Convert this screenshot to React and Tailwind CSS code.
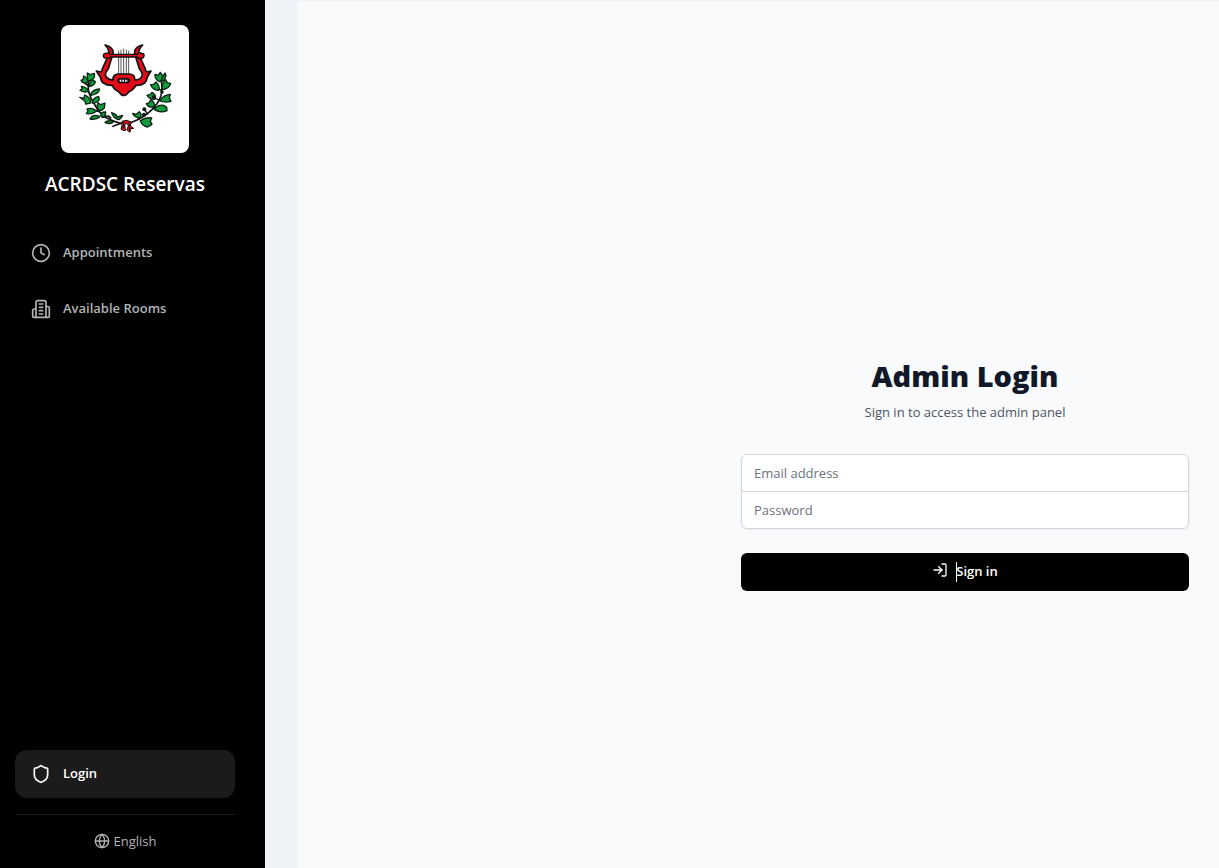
import React from "react";
import { Clock, Globe, LogIn, Shield } from "lucide-react";

const leaves = [
  "M98 184 Q96 172 97 159 L106 164 L118 160 Q121 172 112 179 Z",
  "M96 189 Q83 192 78 181 L84 179 L86 168 Q98 174 99 187 Z",
  "M103 198 Q104 184 113 180 L121 185 Q119 197 103 200 Z",
  "M98 214 Q86 219 75 211 L82 206 L79 199 Q92 200 100 211 Z",
  "M106 225 Q112 208 134 207 Q132 222 106 227 Z",
  "M104 250 L92 252 L90 244 L74 232 L87 235 L89 225 Q105 231 108 248 Z",
  "M112 247 Q114 233 131 229 L133 238 Q129 248 113 250 Z",
  "M122 275 Q113 283 94 281 L99 274 L96 267 Q111 262 123 272 Z",
  "M130 269 Q124 260 129 248 L137 254 L150 249 L148 264 Q140 273 131 271 Z",
  "M133 292 Q124 300 105 297 L112 288 Q124 283 134 290 Z",
  "M137 287 Q138 275 152 276 L151 286 L145 292 Z",
  "M174 307 Q163 314 150 307 Q158 299 173 303 Z",
  "M188 298 Q175 293 170 278 L183 284 L187 291 L203 286 Q196 299 189 299 Z",
  "M313 185 Q299 178 300 163 L309 166 L316 157 L324 169 Q322 182 314 185 Z",
  "M319 185 Q320 171 330 159 L333 167 L328 180 Z",
  "M308 211 Q292 208 287 194 L296 193 L303 186 Q315 196 312 210 Z",
  "M322 208 Q319 190 332 179 L337 188 L347 191 Q343 206 323 209 Z",
  "M298 238 Q287 240 276 226 L286 223 L291 217 Q304 224 301 236 Z",
  "M315 243 Q323 225 346 223 L343 234 L348 244 Q331 249 315 243 Z",
  "M295 261 Q281 264 274 251 L283 248 L287 239 Q301 248 298 259 Z",
  "M298 267 Q312 252 326 256 L335 262 L336 272 Q318 281 298 269 Z",
  "M253 294 Q238 292 233 280 L244 283 L253 275 Q262 284 256 294 Z",
  "M256 302 Q270 291 290 294 L286 304 L291 313 L278 321 Q262 318 256 302 Z",
];

function Emblem() {
  return (
    <svg viewBox="18 15 384 384" className="size-full" role="img" aria-label="ACRDSC emblem" strokeLinejoin="round">
      <g fill="none" stroke="#111111" strokeWidth="5" strokeLinecap="round">
        <path d="M103 174 Q98 198 101 215 Q107 236 117 250 Q132 279 153 293 Q174 303 196 310" />
        <path d="M90 190 L101 198 M90 210 L102 216 M124 216 L106 225 M145 258 L127 268 M120 272 L131 274 M142 292 L160 288 L167 294 M174 319 L202 308 M230 307 Q266 293 283 276 Q309 254 318 227 Q324 203 317 175" />
        <path d="M300 200 L319 211 M294 231 L312 240 M288 257 L298 263 M268 269 L278 282 M247 291 L253 299 M318 242 L330 236" strokeWidth="4" />
      </g>
      <g fill="#119b3d" stroke="#0c2414" strokeWidth="4">
        {leaves.map((d) => <path d={d} key={d} />)}
      </g>
      <g fill="#111111">
        <circle cx="268" cy="268" r="6" /><circle cx="267" cy="284" r="6" />
        <circle cx="295" cy="231" r="5" /><circle cx="321" cy="216" r="5" />
      </g>
      <path d="M191 92 V164 M198 89 V164 M206 86 V164 M214 89 V164 M221 92 V164" stroke="#333333" strokeWidth="2.5" />
      <g transform="translate(69 60)" fill="#e30b17" stroke="#111111" strokeWidth="5">
        <path d="M81 15 Q98 17 105 32 Q107 42 101 54 L91 86 Q80 99 83 108 Q90 120 106 120 Q102 105 120 102 H155 Q172 104 170 120 Q186 120 192 108 Q195 99 184 86 L174 54 Q168 42 170 32 Q177 17 194 15 Q181 27 182 42 L201 84 Q203 94 206 96 L219 93 L208 111 Q206 124 200 129 Q188 137 173 136 Q168 148 153 155 Q138 178 122 155 Q107 148 103 136 Q88 137 76 129 Q69 124 67 111 L55 93 L69 96 Q72 94 74 84 L93 42 Q94 27 81 15 Z" />
        <path d="M83 40 Q91 36 97 43 H178 Q184 35 191 40 Q200 40 198 48 Q197 55 190 55 Q183 58 178 51 H97 Q91 58 84 54 Q76 55 76 47 Q76 40 83 40 Z" strokeWidth="4" />
        <rect x="119" y="115" width="36" height="14" rx="6" fill="#111111" strokeWidth="2" />
      </g>
      <path d="M194 182 H219" stroke="white" strokeWidth="6" strokeDasharray="5 3" />
      <g fill="#e30b17" stroke="#111111" strokeWidth="3">
        <path d="M201 304 L214 301 L229 306 L226 318 L236 325 L227 326 L225 337 L215 329 L207 332 L198 328 Q202 317 201 304 Z" />
        <path d="M211 328 L209 314 L216 310 L220 317 L217 328" fill="white" />
        <path d="M206 305 L205 324 M222 307 L224 332" fill="none" />
      </g>
    </svg>
  );
}

function Building({ size, strokeWidth }) {
  return (
    <svg width={size} height={size} viewBox="0 0 24 24" fill="none" stroke="currentColor" strokeWidth={strokeWidth} strokeLinecap="round" strokeLinejoin="round" aria-hidden="true">
      <path d="M6 22V4a2 2 0 0 1 2-2h8a2 2 0 0 1 2 2v18Z" />
      <path d="M6 12H4a2 2 0 0 0-2 2v6a2 2 0 0 0 2 2h2M18 9h2a2 2 0 0 1 2 2v9a2 2 0 0 1-2 2h-2" />
      <path d="M10 6h4M10 10h4M10 14h4M10 18h4" />
    </svg>
  );
}

const navItems = [
  { label: "Appointments", icon: Clock },
  { label: "Available Rooms", icon: Building },
];

function Sidebar() {
  return (
    <aside className="flex w-[265px] shrink-0 flex-col bg-black pt-[25px] pr-[30px] pb-[17px] pl-[15px]">
      <div className="flex flex-col items-center gap-4">
        <div className="size-32 overflow-hidden rounded-lg bg-white"><Emblem /></div>
        <h1 className="text-[19px] leading-[30px] font-semibold whitespace-nowrap text-white">ACRDSC Reservas</h1>
      </div>
      <nav className="mt-[30px] flex flex-col gap-2">
        {navItems.map(({ label, icon: Icon }) => (
          <a href="#" key={label} className="flex h-12 items-center gap-3 rounded-xl px-4 text-[13px] font-[650] text-[#b3b3b3]">
            <Icon size={20} strokeWidth={2} />
            {label}
          </a>
        ))}
      </nav>
      <div className="mt-auto">
        <a href="#" className="flex h-12 items-center gap-3 rounded-xl bg-[#1b1b1b] px-4 text-[13px] font-[650] text-white">
          <Shield size={20} strokeWidth={2} />
          Login
        </a>
        <div className="mt-4 flex justify-center border-t border-[#1a1a1a] pt-4">
          <button type="button" className="flex items-center gap-1 text-[13px] leading-5 text-[#b3b3b3]">
            <Globe size={16} strokeWidth={2} />
            English
          </button>
        </div>
      </div>
    </aside>
  );
}

function LoginForm() {
  return (
    <div className="w-full max-w-md">
      <h2 className="text-center text-[29px] leading-9 font-extrabold text-[#111827]">Admin Login</h2>
      <p className="mt-2 text-center text-[13px] leading-5 text-[#4b5563]">Sign in to access the admin panel</p>
      <form className="mt-8" onSubmit={(e) => e.preventDefault()}>
        <div className="rounded-md shadow-xs">
          <input type="email" aria-label="Email address" placeholder="Email address" className="block h-[38px] w-full rounded-t-md border border-[#d1d5db] bg-white px-3 text-[13px] text-[#111827] placeholder:text-[#6b7280]" />
          <input type="password" aria-label="Password" placeholder="Password" className="-mt-px block h-[38px] w-full rounded-b-md border border-[#d1d5db] bg-white px-3 text-[13px] text-[#111827] placeholder:text-[#6b7280]" />
        </div>
        <button type="submit" className="mt-6 flex h-[38px] w-full items-center justify-center gap-2 rounded-md bg-black text-[13px] font-[650] text-white">
          <LogIn size={16} strokeWidth={2} className="mb-1" />
          <span className="flex items-center">
            <span className="-mr-px h-5 w-px bg-white" />
            Sign in
          </span>
        </button>
      </form>
    </div>
  );
}

export default function App() {
  return (
    <div className="flex min-h-screen bg-[#eff3f8] font-['Open_Sans','Noto_Sans',sans-serif]">
      <Sidebar />
      <div className="flex min-w-0 flex-1 pt-px pl-8">
        <main className="flex flex-1 items-center justify-end bg-[#f9fafc] px-[30px] pt-20">
          <LoginForm />
        </main>
      </div>
    </div>
  );
}
